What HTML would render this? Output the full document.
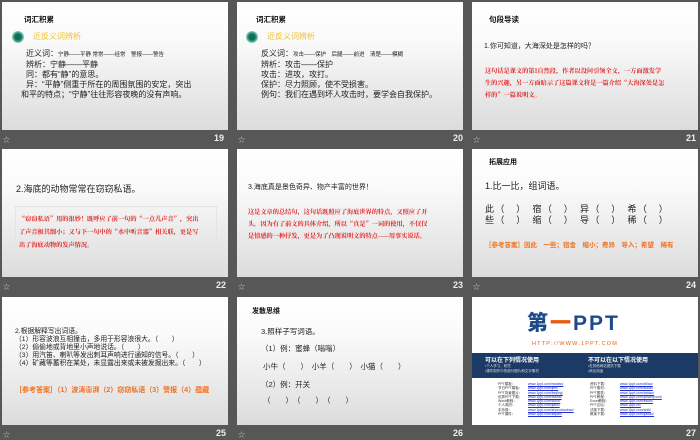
<!DOCTYPE html>
<html><head><meta charset="utf-8"><style>
*{margin:0;padding:0;box-sizing:border-box}
body{width:700px;height:438px;background:#575757;position:relative;overflow:hidden;font-family:"Liberation Sans","Noto Sans CJK SC",sans-serif;color:#222}
.s{position:absolute;width:226px;height:128px;background:linear-gradient(#fff,#fafafa 30%,#dcdcdc);overflow:hidden}
.s div,.s span{position:absolute;white-space:nowrap}
.n{position:absolute;color:#eee;font-size:9px;font-weight:bold}
.st{position:absolute;color:#ccc;font-size:7px}
.t{font-size:7.5px;font-weight:bold;color:#111}
.r{color:#e02020;font-family:"Noto Serif CJK SC",serif;font-size:6.2px;line-height:12px;font-weight:bold}
.o{color:#f07020;font-weight:bold}
</style></head><body>

<div class="s" style="left:2px;top:2px">
<div class="t" style="left:22px;top:12px">词汇积累</div>
<div style="left:10px;top:29px;width:12px;height:12px;border-radius:50%;background:radial-gradient(#0b6f5a 35%,#8cd0c0 70%,transparent 72%)"></div>
<div style="left:31px;top:29px;font-size:8px;color:#f0c030">近反义词辨析</div>
<div style="left:24px;top:47px;font-size:8px;line-height:10px">近义词：<span style="position:static;font-size:5.5px">宁静——平静 常常——经常　警报——警告</span><br>辨析：宁静——平静<br>同：都有“静”的意思。<br>异：“平静”侧重于所在的周围氛围的安定，突出</div>
<div style="left:19px;top:87px;font-size:8px">和平的特点；“宁静”往往形容夜晚的没有声响。</div>
</div>
<div class="st" style="left:3px;top:135px">☆</div><div class="n" style="left:214px;top:133px">19</div>

<div class="s" style="left:237px;top:2px">
<div class="t" style="left:19px;top:12px">词汇积累</div>
<div style="left:9px;top:29px;width:12px;height:12px;border-radius:50%;background:radial-gradient(#0b6f5a 35%,#8cd0c0 70%,transparent 72%)"></div>
<div style="left:30px;top:29px;font-size:8px;color:#f0c030">近反义词辨析</div>
<div style="left:24px;top:47px;font-size:8px;line-height:10px">反义词：<span style="position:static;font-size:5.5px">攻击——保护　后腿——前进　清楚——模糊</span><br>辨析：攻击——保护<br>攻击：进攻，攻打。<br>保护：尽力照顾，使不受损害。<br>例句：我们在遇到坏人攻击时，要学会自我保护。</div>
</div>
<div class="st" style="left:238px;top:135px">☆</div><div class="n" style="left:453px;top:133px">20</div>

<div class="s" style="left:472px;top:2px">
<div class="t" style="left:17px;top:12px">句段导读</div>
<div style="left:12px;top:39px;font-size:7px">1.你可知道，大海深处是怎样的吗？</div>
<div class="r" style="left:13px;top:63px">这句话是课文的第1自然段，作者以设问引领全文，一方面激发学<br>生的兴趣，另一方面暗示了这篇课文将是一篇介绍“大海深处是怎<br>样的”一篇说明文。</div>
</div>
<div class="st" style="left:473px;top:135px">☆</div><div class="n" style="left:686px;top:133px">21</div>

<div class="s" style="left:2px;top:149px">
<div style="left:14px;top:33px;font-size:9px">2.海底的动物常常在窃窃私语。</div>
<div style="left:13px;top:57px;width:202px;height:40px;border:1px solid #e4e4e4"></div>
<div class="r" style="left:17px;top:63px;line-height:13px">“窃窃私语”用的很妙！既呼应了前一句的“一点儿声音”，突出<br>了声音极其细小；又与下一句中的“水中听音器”相关联，更是写<br>出了海底动物的发声情况。</div>
</div>
<div class="st" style="left:3px;top:282px">☆</div><div class="n" style="left:216px;top:280px">22</div>

<div class="s" style="left:237px;top:149px">
<div style="left:11px;top:33px;font-size:7px">3.海底真是景色奇异、物产丰富的世界！</div>
<div class="r" style="left:11px;top:57px">这是文章的总结句，这句话既照应了海底世界的特点，又照应了开<br>头。因为有了前文的具体介绍，所以“真是”一词的使用，不仅仅<br>是情感的一种抒发，更是为了凸现说明文的特点——用事实说话。</div>
</div>
<div class="st" style="left:238px;top:282px">☆</div><div class="n" style="left:453px;top:280px">23</div>

<div class="s" style="left:472px;top:149px">
<div class="t" style="left:17px;top:8px;font-size:7px">拓展应用</div>
<div style="left:13px;top:30px;font-size:9px">1.比一比，组词语。</div>
<div style="left:13px;top:55px;font-size:9px;line-height:11px;letter-spacing:1.4px">此（　）　宿（　）　异（　）　希（　）<br>些（　）　缩（　）　导（　）　稀（　）</div>
<div class="o" style="left:13px;top:90px;font-size:6.5px">［参考答案］因此　一些；宿舍　缩小；奇异　导入；希望　稀有</div>
</div>
<div class="st" style="left:473px;top:282px">☆</div><div class="n" style="left:686px;top:280px">24</div>

<div class="s" style="left:2px;top:297px">
<div style="left:13px;top:31px;font-size:6.8px;line-height:8px">2.根据解释写出词语。<br>（1）形容波浪互相撞击，多用于形容浪很大。（　　）<br>（2）偷偷地或背地里小声地说话。（　　）<br>（3）用汽笛、喇叭等发出刺耳声响进行通知的信号。（　　）<br>（4）矿藏等蓄积在某处，未显露出来或未被发掘出来。（　　）</div>
<div class="o" style="left:13px;top:88px;font-size:7px">［参考答案］（1）波涛澎湃（2）窃窃私语（3）警报（4）蕴藏</div>
</div>
<div class="st" style="left:3px;top:430px">☆</div><div class="n" style="left:216px;top:428px">25</div>

<div class="s" style="left:237px;top:297px">
<div class="t" style="left:15px;top:9px;font-size:7px">发散思维</div>
<div style="left:24px;top:29px;font-size:7.5px">3.照样子写词语。</div>
<div style="left:24px;top:46px;font-size:7.5px">（1）例：蜜蜂（嗡嗡）</div>
<div style="left:26px;top:64px;font-size:7.5px">小牛（　　）　小羊（　　）　小猫（　　）</div>
<div style="left:24px;top:82px;font-size:7.5px">（2）例：开关</div>
<div style="left:26px;top:98px;font-size:7.5px">（　　）　（　　）　（　　）</div>
</div>
<div class="st" style="left:238px;top:430px">☆</div><div class="n" style="left:453px;top:428px">26</div>

<div class="s" style="left:472px;top:297px;background:#fff">
<div style="left:55px;top:15px;font-size:21px;line-height:24px;font-weight:900;color:#1d4b8a;letter-spacing:2px">第<span style="position:static;color:#e85a10">一</span>PPT</div>
<div style="left:60px;top:44px;font-size:5.5px;color:#e86010;letter-spacing:1.2px">HTTP://WWW.1PPT.COM</div>
<div style="left:0;top:56px;width:226px;height:25px;background:#1c3a66"></div>
<div style="left:13px;top:58px;font-size:6px;color:#fff;font-weight:bold">可以在下列情况使用</div>
<div style="left:13px;top:67px;font-size:3.5px;color:#ddd;line-height:5px">•个人学习、研究<br>•课件制作中的部分图片和文字素材</div>
<div style="left:116px;top:58px;font-size:6px;color:#fff;font-weight:bold">不可以在以下情况使用</div>
<div style="left:116px;top:67px;font-size:3.5px;color:#ddd;line-height:5px">•在其他网站提供下载<br>•商业用途</div>
<div style="left:26px;top:85px;font-size:3.5px;line-height:4.3px;color:#333">PPT模板：<br>节日PPT模板：<br>PPT背景图片：<br>优秀PPT下载：<br>Word教程：<br>个人简历：<br>手抄报：<br>PPT课件：</div>
<div style="left:56px;top:85px;font-size:3.5px;line-height:4.3px;color:#2030d0;text-decoration:underline">www.1ppt.com/moban/<br>www.1ppt.com/jieri/<br>www.1ppt.com/beijing/<br>www.1ppt.com/xiazai/<br>www.1ppt.com/word/<br>www.1ppt.com/jianli/<br>www.1ppt.com/shouchaobao/<br>www.1ppt.com/kejian/</div>
<div style="left:118px;top:85px;font-size:3.5px;line-height:4.3px;color:#333">资料下载：<br>PPT素材：<br>PPT图表：<br>PPT教程：<br>Excel教程：<br>PPT论坛：<br>试卷下载：<br>教案下载：</div>
<div style="left:148px;top:85px;font-size:3.5px;line-height:4.3px;color:#2030d0;text-decoration:underline">www.1ppt.com/ziliao/<br>www.1ppt.com/sucai/<br>www.1ppt.com/tubiao/<br>www.1ppt.com/powerpoint/<br>www.1ppt.com/excel/<br>www.1ppt.cn/<br>www.1ppt.com/shiti/<br>www.1ppt.com/jiaoan/</div>
</div>
<div class="n" style="left:686px;top:428px">27</div>
</body></html>
